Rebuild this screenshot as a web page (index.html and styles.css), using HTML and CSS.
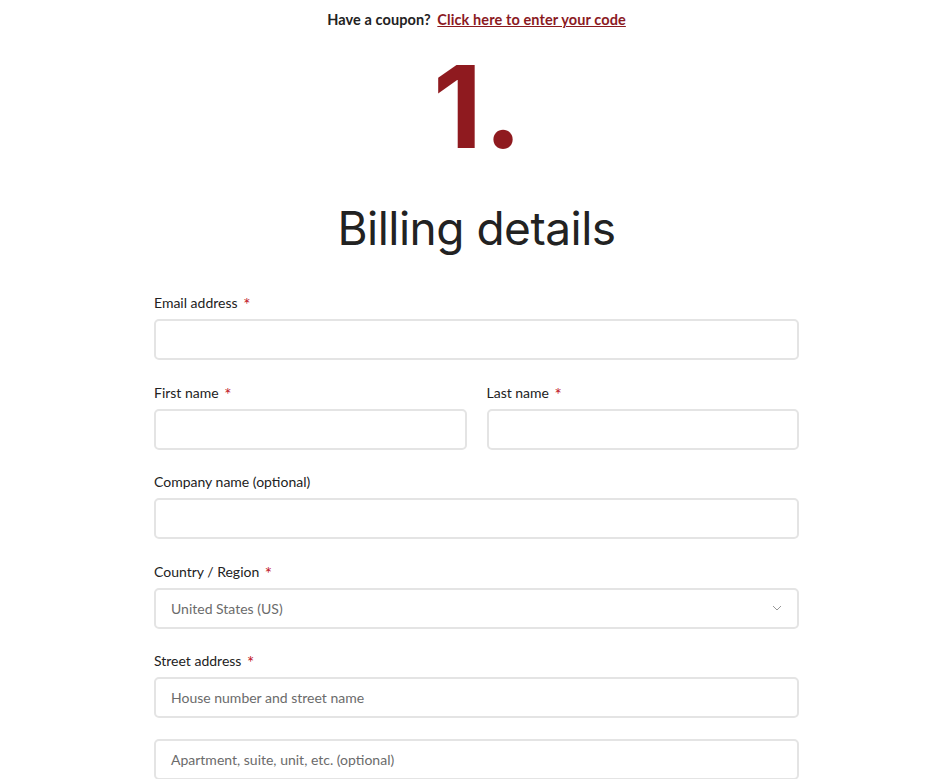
FILE: index.html
```html
<!DOCTYPE html>
<html lang="en">
<head>
<meta charset="utf-8">
<title>Checkout</title>
<link rel="stylesheet" href="styles.css">
</head>
<body>
<div class="page">
  <p class="coupon">Have a coupon? <a href="#">Click here to enter your code</a></p>
  <div class="step">1.</div>
  <h2 class="title">Billing details</h2>
  <form class="form">
    <div class="field">
      <label>Email address <span class="req">*</span></label>
      <div class="input"></div>
    </div>
    <div class="row">
      <div class="field">
        <label>First name <span class="req">*</span></label>
        <div class="input"></div>
      </div>
      <div class="field">
        <label>Last name <span class="req">*</span></label>
        <div class="input"></div>
      </div>
    </div>
    <div class="field">
      <label>Company name (optional)</label>
      <div class="input"></div>
    </div>
    <div class="field">
      <label>Country / Region <span class="req">*</span></label>
      <div class="input select"><span class="val">United States (US)</span>
        <svg class="chev" width="10" height="6" viewBox="0 0 10 6"><path d="M1 1l4 4 4-4" fill="none" stroke="#999" stroke-width="1"/></svg>
      </div>
    </div>
    <div class="field">
      <label>Street address <span class="req">*</span></label>
      <div class="input"><span class="ph">House number and street name</span></div>
      <div class="input second"><span class="ph">Apartment, suite, unit, etc. (optional)</span></div>
    </div>
  </form>
</div>
</body>
</html>
```
FILE: styles.css
```css
* { box-sizing: border-box; }
html, body { margin: 0; padding: 0; background: #fff; }
body { font-family: "Lato", "Noto Sans", sans-serif; color: #222; }
.page { width: 645px; margin-left: 154px; }
.coupon { margin: 11px 0 0; text-align: center; font-size: 14.5px; font-weight: 700; color: #222; line-height: 18px; letter-spacing: 0.1px; }
.coupon a { color: #8b1a1f; text-decoration: underline; margin-left: 3px; }
.step { text-align: center; font-family: "Inter", sans-serif; font-weight: 700; font-size: 114px; line-height: 120px; color: #8f1a1f; margin-top: 18px; letter-spacing: 2px; padding-left: 4px; height: 116px; }
.title { text-align: center; font-family: "Inter", sans-serif; font-weight: 400; font-size: 46px; line-height: 54px; margin: 38px 0 0; color: #222; letter-spacing: -0.5px; }
.form { margin-top: 38px; }
.field { margin-bottom: 22.5px; }
.field label { display: block; font-size: 14px; line-height: 18px; color: #222; margin-bottom: 8px; position: relative; top: 1px; }
.req { color: #c0121e; margin-left: 2px; font-size: 17px; line-height: 14px; position: relative; top: 3px; }
.input { height: 41px; border: 2px solid #e4e4e4; border-radius: 5px; display: flex; align-items: center; padding: 0 15px; font-size: 14px; color: #666; }
.input.second { margin-top: 21px; }
.select { justify-content: space-between; }
.row { display: flex; gap: 20px; }
.row .field { flex: 1; }
.ph, .val { color: #6b6b6b; }
```
